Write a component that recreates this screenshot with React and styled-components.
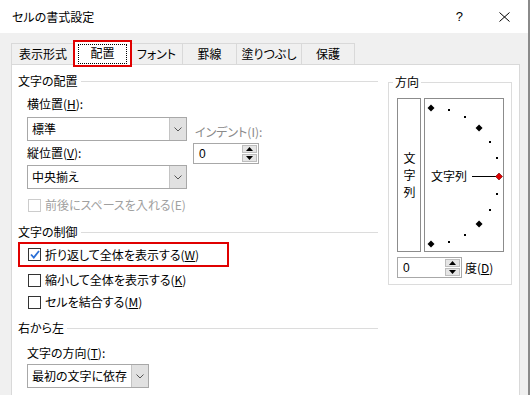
import React from "react";
import styled, { createGlobalStyle } from "styled-components";

const GlobalStyle = createGlobalStyle`
  body {
    margin: 0;
    font-family: "Noto Sans CJK JP", "Noto Sans", sans-serif;
    font-size: 12px;
    color: #000;
    font-feature-settings: "palt";
  }
`;

const Dialog = styled.div`
  width: 530px;
  height: 395px;
  overflow: hidden;
  display: flex;
  flex-direction: column;
  background: #f0f0f0;
  border-right: 2px solid #8a8a8a;
  box-sizing: border-box;
`;

const TitleBar = styled.div`
  height: 33px;
  flex-shrink: 0;
  background: #fff;
  display: flex;
  align-items: center;
  padding: 0 18px 0 12px;
  line-height: 16px;
  > span {
    flex: 1;
  }
`;

const Help = styled.div`
  font-family: "Liberation Sans", sans-serif;
  font-size: 13px;
  margin-right: 36px;
`;

const Body = styled.div`
  flex: 1;
  display: flex;
  flex-direction: column;
  padding: 0 8px 0 11px;
`;

const TabRow = styled.div`
  height: 31px;
  flex-shrink: 0;
  display: flex;
  align-items: flex-end;
`;

const Tab = styled.div`
  position: relative;
  box-sizing: border-box;
  width: ${(p) => p.w}px;
  height: ${(p) => (p.active ? 25 : 21)}px;
  margin-bottom: ${(p) => (p.active ? -1 : 0)}px;
  margin-left: -1px;
  background: ${(p) => (p.active ? "#fff" : "#f0f0f0")};
  border: 1px solid #d9d9d9;
  border-bottom: none;
  display: flex;
  align-items: center;
  justify-content: center;
  line-height: 16px;
  z-index: ${(p) => (p.active ? 2 : 1)};
  &:first-child {
    margin-left: 0;
  }
`;

const RedFrame = styled.div`
  position: absolute;
  left: -2px;
  right: -2px;
  top: -1px;
  bottom: -2px;
  border: 2px solid #e00000;
`;

const FocusRing = styled.div`
  position: absolute;
  left: 3px;
  right: 3px;
  top: 3px;
  bottom: 1px;
  border: 1px dotted #000;
`;

const Panel = styled.div`
  flex: 1;
  background: #fff;
  border: 1px solid #d9d9d9;
  border-bottom: none;
  display: flex;
  gap: 10px;
  padding: 8px 7px 0 6px;
`;

const LeftColumn = styled.div`
  width: 360px;
  display: flex;
  flex-direction: column;
`;

const SectionHeader = styled.div`
  display: flex;
  align-items: center;
  gap: 3px;
  line-height: 16px;
  margin-top: ${(p) => p.mt || 0}px;
  &::after {
    content: "";
    flex: 1;
    height: 1px;
    background: #dcdcdc;
  }
`;

const AlignGroup = styled.div`
  display: flex;
  gap: 6px;
  padding-left: 9px;
  margin-top: 7px;
`;

const Stack = styled.div`
  display: flex;
  flex-direction: column;
  padding-top: ${(p) => p.pt || 0}px;
`;

const Label = styled.div`
  line-height: 16px;
  color: ${(p) => (p.disabled ? "#8a8a8a" : "#000")};
  margin-top: ${(p) => p.mt || 0}px;
  padding-left: ${(p) => p.pl || 0}px;
`;

const SelectBox = styled.div`
  box-sizing: border-box;
  width: ${(p) => p.w}px;
  height: 24px;
  border: 1px solid #a8a8a8;
  display: flex;
  align-items: stretch;
  margin-top: ${(p) => p.mt || 0}px;
  margin-left: ${(p) => p.ml || 0}px;
  background: #fff;
`;

const SelectText = styled.div`
  flex: 1;
  padding-left: 4px;
  display: flex;
  align-items: center;
  line-height: 16px;
`;

const DropButton = styled.div`
  width: 16px;
  background: #e1e1e1;
  border-left: 1px solid #c4c4c4;
  display: flex;
  align-items: center;
  justify-content: center;
`;

const Spinner = styled.div`
  box-sizing: border-box;
  width: ${(p) => p.w}px;
  height: 21px;
  border: 1px solid #a8a8a8;
  display: flex;
  margin-top: ${(p) => p.mt || 0}px;
  background: #fff;
`;

const SpinValue = styled.div`
  flex: 1;
  padding-left: 5px;
  display: flex;
  align-items: center;
  font-family: "Liberation Sans", sans-serif;
  font-size: 12px;
`;

const SpinButtons = styled.div`
  width: 15px;
  margin: 1px 1px 1px 0;
  display: flex;
  flex-direction: column;
  gap: 1px;
`;

const SpinHalf = styled.div`
  flex: 1;
  background: #e5e5e5;
  border: 1px solid #bdbdbd;
  display: flex;
  align-items: center;
  justify-content: center;
`;

const CheckRow = styled.div`
  display: flex;
  align-items: center;
  gap: 4px;
  line-height: 16px;
  padding-left: ${(p) => p.pl || 0}px;
  margin-top: ${(p) => p.mt || 0}px;
  color: ${(p) => (p.disabled ? "#a0a0a0" : "#000")};
`;

const CheckBox = styled.div`
  box-sizing: border-box;
  width: 13px;
  height: 13px;
  border: 1px solid ${(p) => (p.disabled ? "#cccccc" : "#333")};
  background: #fff;
  display: flex;
  align-items: center;
  justify-content: center;
`;

const Highlight = styled.div`
  align-self: flex-start;
  box-sizing: border-box;
  width: 211px;
  height: 25px;
  border: 2px solid #e00000;
  padding-left: 8px;
  display: flex;
  align-items: center;
  margin-top: 2px;
`;

const FieldSet = styled.div`
  position: relative;
  box-sizing: border-box;
  width: 124px;
  align-self: flex-start;
  margin-top: 9px;
  border: 1px solid #dcdcdc;
  padding: 15px 7px 6px 8px;
`;

const Legend = styled.div`
  position: absolute;
  top: -9px;
  left: 4px;
  padding: 0 2px;
  background: #fff;
  line-height: 16px;
`;

const OrientRow = styled.div`
  display: flex;
  gap: 3px;
  height: 154px;
`;

const VerticalBox = styled.div`
  box-sizing: border-box;
  width: 24px;
  border: 1px solid #8c8c8c;
  display: flex;
  align-items: center;
  justify-content: center;
  writing-mode: vertical-rl;
  letter-spacing: 5px;
  line-height: 16px;
  padding-top: 5px;
`;

const Dial = styled.div`
  position: relative;
  box-sizing: border-box;
  width: 80px;
  border: 1px solid #8c8c8c;
  > svg {
    display: block;
  }
`;

const DialText = styled.span`
  position: absolute;
  left: 6px;
  top: 69px;
  line-height: 16px;
`;

const DegreeRow = styled.div`
  display: flex;
  align-items: center;
  gap: 3px;
  margin-top: 5px;
  line-height: 16px;
`;

const Chevron = () => (
  <svg width="8" height="5" viewBox="0 0 8 5">
    <polyline points="0.5,0.5 4,4 7.5,0.5" fill="none" stroke="#555" strokeWidth="1" />
  </svg>
);

const Arrow = ({ up }) => (
  <svg width="7" height="4" viewBox="0 0 7 4">
    <polygon points={up ? "0,4 7,4 3.5,0" : "0,0 7,0 3.5,4"} fill="#000" />
  </svg>
);

const Select = ({ w, mt, ml, children }) => (
  <SelectBox w={w} mt={mt} ml={ml}>
    <SelectText>{children}</SelectText>
    <DropButton>
      <Chevron />
    </DropButton>
  </SelectBox>
);

const SpinBox = ({ w, mt }) => (
  <Spinner w={w} mt={mt}>
    <SpinValue>0</SpinValue>
    <SpinButtons>
      <SpinHalf>
        <Arrow up />
      </SpinHalf>
      <SpinHalf>
        <Arrow />
      </SpinHalf>
    </SpinButtons>
  </Spinner>
);

const Check = ({ checked, disabled }) => (
  <CheckBox disabled={disabled}>
    {checked && (
      <svg width="10" height="9" viewBox="0 0 10 9">
        <polyline points="1,4.5 3.8,7.5 9,1" fill="none" stroke="#2a6fd6" strokeWidth="1.8" />
      </svg>
    )}
  </CheckBox>
);

// 方向ダイヤルの点: 中心 (6,77)、半径 68
const dialPoints = [90, 75, 60, 45, 30, 15, 0, -15, -30, -45, -60, -75, -90].map((deg) => {
  const r = (deg * Math.PI) / 180;
  return { deg, x: 6 + 68 * Math.cos(r), y: 77 - 68 * Math.sin(r) };
});

const diamond = (x, y, s) => `${x},${y - s} ${x + s},${y} ${x},${y + s} ${x - s},${y}`;

const tabs = [
  { label: "表示形式", w: 64 },
  { label: "配置", w: 57, active: true },
  { label: "フォント", w: 53 },
  { label: "罫線", w: 55 },
  { label: "塗りつぶし", w: 66 },
  { label: "保護", w: 54 },
];

const App = () => (
  <>
    <GlobalStyle />
    <Dialog>
      <TitleBar>
        <span>セルの書式設定</span>
        <Help>?</Help>
        <svg width="11" height="10" viewBox="0 0 11 10">
          <line x1="0.5" y1="0.5" x2="10.5" y2="9.5" stroke="#000" strokeWidth="1" />
          <line x1="10.5" y1="0.5" x2="0.5" y2="9.5" stroke="#000" strokeWidth="1" />
        </svg>
      </TitleBar>
      <Body>
        <TabRow>
          {tabs.map((t) => (
            <Tab key={t.label} w={t.w} active={t.active}>
              {t.label}
              {t.active && (
                <>
                  <FocusRing />
                  <RedFrame />
                </>
              )}
            </Tab>
          ))}
        </TabRow>
        <Panel>
          <LeftColumn>
            <SectionHeader>文字の配置</SectionHeader>
            <AlignGroup>
              <Stack>
                <Label>
                  横位置(<u>H</u>):
                </Label>
                <Select w={160} mt={5}>標準</Select>
                <Label mt={4}>
                  縦位置(<u>V</u>):
                </Label>
                <Select w={160} mt={4}>中央揃え</Select>
              </Stack>
              <Stack pt={28}>
                <Label disabled pl={2}>インデント(I):</Label>
                <SpinBox w={66} mt={3} />
              </Stack>
            </AlignGroup>
            <CheckRow disabled pl={10} mt={8}>
              <Check disabled />
              <span>前後にスペースを入れる(E)</span>
            </CheckRow>
            <SectionHeader mt={11}>文字の制御</SectionHeader>
            <Highlight>
              <CheckRow>
                <Check checked />
                <span>
                  折り返して全体を表示する(<u>W</u>)
                </span>
              </CheckRow>
            </Highlight>
            <CheckRow pl={10} mt={5}>
              <Check />
              <span>
                縮小して全体を表示する(<u>K</u>)
              </span>
            </CheckRow>
            <CheckRow pl={10} mt={6}>
              <Check />
              <span>
                セルを結合する(<u>M</u>)
              </span>
            </CheckRow>
            <SectionHeader mt={10}>右から左</SectionHeader>
            <Label mt={9} pl={9}>
              文字の方向(<u>T</u>):
            </Label>
            <Select w={122} mt={3} ml={9}>最初の文字に依存</Select>
          </LeftColumn>
          <FieldSet>
            <Legend>方向</Legend>
            <OrientRow>
              <VerticalBox>文字列</VerticalBox>
              <Dial>
                <svg width="78" height="152" viewBox="0 0 78 152">
                  <line x1="47" y1="77.5" x2="72" y2="77.5" stroke="#000" strokeWidth="1" />
                  {dialPoints.map((p) =>
                    p.deg === 0 ? (
                      <polygon key={p.deg} points={diamond(p.x, p.y + 0.5, 3.5)} fill="#e00000" stroke="#600" strokeWidth="0.6" />
                    ) : p.deg % 45 === 0 ? (
                      <polygon key={p.deg} points={diamond(p.x, p.y, 3.5)} fill="#000" />
                    ) : (
                      <rect key={p.deg} x={Math.round(p.x) - 1} y={Math.round(p.y) - 1} width="2" height="2" fill="#000" />
                    )
                  )}
                </svg>
                <DialText>文字列</DialText>
              </Dial>
            </OrientRow>
            <DegreeRow>
              <SpinBox w={65} />
              <span>
                度(<u>D</u>)
              </span>
            </DegreeRow>
          </FieldSet>
        </Panel>
      </Body>
    </Dialog>
  </>
);

export default App;
